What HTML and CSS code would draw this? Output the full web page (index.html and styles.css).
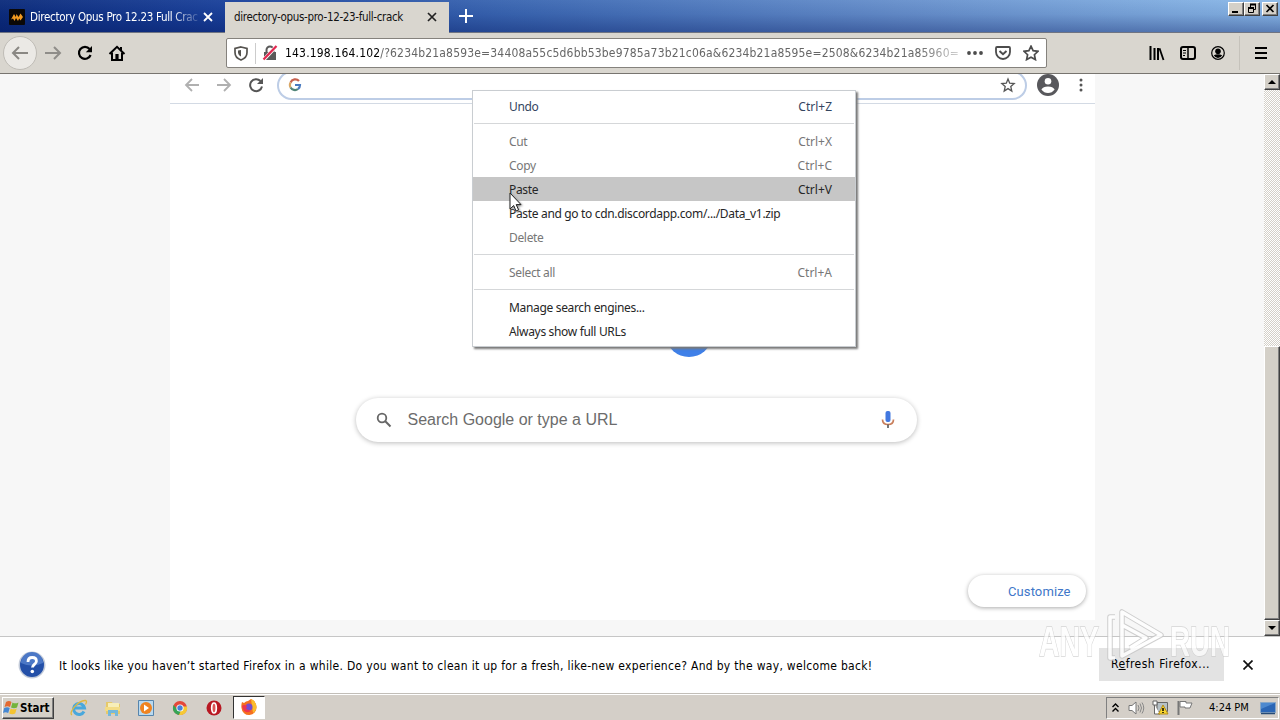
FILE: index.html
```html
<!DOCTYPE html>
<html lang="en">
<head>
<meta charset="utf-8">
<title>directory-opus-pro-12-23-full-crack</title>
<link rel="stylesheet" href="styles.css">
</head>
<body>
<header class="tabs">
  <div class="tab">
    <svg class="favicon" width="16" height="16" viewBox="0 0 16 16"><rect width="16" height="16" rx="1" fill="#0b0807"/><path d="M2 10.500 5 5l1.800 3L7.500 5l2 3 2-3.500L14 8l-2.500 3.500-1.300-2-1.200 2.500-2-3-1.500 3-1.500-2.500z" fill="#f39a21"/></svg>
    <span class="tab-title tab-title-faded">Directory Opus Pro 12.23 Full Crac</span>
    <svg class="tab-close" width="10" height="10" viewBox="0 0 10 10"><path d="M1 1l8 8M9 1l-8 8" stroke="#fff" stroke-width="1.800"/></svg>
  </div>
  <div class="tab tab-active">
    <span class="tab-title">directory-opus-pro-12-23-full-crack</span>
    <svg class="tab-close" width="10" height="10" viewBox="0 0 10 10"><path d="M1 1l8 8M9 1l-8 8" stroke="#222" stroke-width="1.700"/></svg>
  </div>
  <svg class="new-tab" width="14" height="14" viewBox="0 0 14 14"><path d="M7 0v14M0 7h14" stroke="#fff" stroke-width="2"/></svg>
  <div class="window-buttons">
    <span class="bevel winbtn"><svg width="14" height="12" viewBox="0 0 14 12"><path d="M3 9h6" stroke="#000" stroke-width="2"/></svg></span>
    <span class="bevel winbtn"><svg width="14" height="12" viewBox="0 0 14 12"><path d="M5.500 4V1.500h5v5H9" fill="none" stroke="#000"/><path d="M5 1.500h6M3 5h6" stroke="#000" stroke-width="2"/><path d="M3.500 4.500h5v5h-5z" fill="none" stroke="#000"/></svg></span>
    <span class="bevel winbtn winbtn-close"><svg width="14" height="12" viewBox="0 0 14 12"><path d="M3.500 2l7 7M10.500 2l-7 7" stroke="#000" stroke-width="1.700"/></svg></span>
  </div>
</header>

<nav class="toolbar">
  <div class="nav-icons">
    <span class="back"><svg width="18" height="14" viewBox="0 0 18 14"><path d="M17 7H2M8 1L2 7l6 6" fill="none" stroke="#8a8883" stroke-width="2"/></svg></span>
    <svg class="forward" width="18" height="14" viewBox="0 0 18 14"><path d="M1 7h15M10 1l6 6-6 6" fill="none" stroke="#8f8d89" stroke-width="2"/></svg>
    <svg class="reload" width="16" height="16" viewBox="0 0 16 16"><path d="M12.600 4A6 6 0 1 0 13.600 10" fill="none" stroke="#000" stroke-width="2.200"/><path d="M15 1v6.200H8.800z"/></svg>
    <svg class="home" width="18" height="17" viewBox="0 0 18 17"><path d="M1.500 9L9 1.800 16.500 9" fill="none" stroke="#000" stroke-width="2"/><path d="M4 7.500V15h10V7.500" fill="none" stroke="#000" stroke-width="2"/><path d="M7.400 9h3.200v5H7.400z"/><path d="M12 2h2v4l-2-2z"/></svg>
  </div>
  <div class="urlbar">
    <svg width="14" height="15" viewBox="0 0 14 15"><path d="M7 1L13 2.500v4c0 3.500-2.500 6.200-6 7.500C3.500 12.700 1 10 1 6.500v-4z" fill="none" stroke="#55534f" stroke-width="1.700"/><path d="M7 4v6.500c-2-1-3-2.500-3-4V4.500z" fill="#55534f"/></svg>
    <span class="url-divider"></span>
    <svg class="lock" width="16" height="16" viewBox="0 0 16 16"><path d="M4.500 7V5a3.500 3.500 0 0 1 7 0v2" fill="none" stroke="#5a5a5a" stroke-width="2"/><path d="M2 7h12v8H2z" fill="#5a5a5a"/><path d="M1.500 15L14.500 1" stroke="#fff" stroke-width="3.500"/><path d="M1.500 14.500L14.500 1" stroke="#e22850" stroke-width="2.300"/></svg>
    <span class="url"><b>143.198.164.102</b>/?6234b21a8593e=34408a55c5d6bb53be9785a73b21c06a&amp;6234b21a8595e=2508&amp;6234b21a85960=</span>
    <svg class="dots" width="16" height="4" viewBox="0 0 16 4"><g fill="#4c4c4c"><circle cx="2" cy="2" r="1.900"/><circle cx="8" cy="2" r="1.900"/><circle cx="14" cy="2" r="1.900"/></g></svg>
    <svg class="pocket" width="16" height="14" viewBox="0 0 16 14"><path d="M2 1h12q1 0 1 1v4a7 7 0 0 1-14 0V2q0-1 1-1z" fill="none" stroke="#4c4c4c" stroke-width="1.800"/><path d="M4.500 5L8 8.200 11.500 5" fill="none" stroke="#4c4c4c" stroke-width="2"/></svg>
    <svg width="16" height="16" viewBox="0 0 16 16"><path d="M8 1.200l2.100 4.500 4.900.6-3.600 3.400 1 4.900L8 12.200l-4.400 2.400 1-4.900L1 6.300l4.900-.6z" fill="none" stroke="#4c4c4c" stroke-width="1.700"/></svg>
  </div>
  <div class="right-icons">
    <svg width="16" height="15" viewBox="0 0 16 15"><path d="M1.500 0v14M5.500 2v12M9 2v12" stroke="#000" stroke-width="2"/><path d="M10.500 2.200L14.500 14" stroke="#000" stroke-width="1.800"/></svg>
    <svg width="16" height="14" viewBox="0 0 16 14"><rect x="1" y="1" width="14" height="12" rx="2" fill="none" stroke="#000" stroke-width="2"/><path d="M8 1v12" stroke="#000" stroke-width="1.500"/><path d="M3 4.500h3M3 7h3M3 9.500h2" stroke="#000"/></svg>
    <svg width="14" height="14" viewBox="0 0 14 14"><circle cx="7" cy="7" r="6.300" fill="none" stroke="#000" stroke-width="1.200"/><circle cx="7" cy="5.200" r="2.800"/><path d="M2.800 9.200q4.200-2 8.400 0Q9.800 12 7 12t-4.200-2.800z"/></svg>
    <span class="tool-divider"></span>
    <svg width="12" height="12" viewBox="0 0 12 12"><path d="M0 1h12M0 6h12M0 11h12" stroke="#000" stroke-width="2"/></svg>
  </div>
</nav>

<main class="viewport">
  <div class="page">
    <section class="shot">
      <div class="chrome-bar">
        <svg width="16" height="14" viewBox="0 0 16 14"><path d="M15 7H2M8 1L2 7l6 6" fill="none" stroke="#b0b0b0" stroke-width="1.800"/></svg>
        <svg width="16" height="14" viewBox="0 0 16 14"><path d="M1 7h13M8 1l6 6-6 6" fill="none" stroke="#b0b0b0" stroke-width="1.800"/></svg>
        <svg width="16" height="16" viewBox="0 0 16 16"><path d="M12.500 4A6 6 0 1 0 14 9.500" fill="none" stroke="#555" stroke-width="2"/><path d="M15 1v6H9z" fill="#555"/></svg>
        <div class="omnibox">
          <svg width="14" height="14" viewBox="0 0 14 14" fill="none" stroke-width="2.200"><path d="M11 3A5 5 0 0 0 2.600 4.500" stroke="#c7624f"/><path d="M2.600 4.500a5 5 0 0 0 0 5" stroke="#d9a765"/><path d="M2.600 9.500A5 5 0 0 0 10 11" stroke="#508477"/><path d="M10 11q2-1.500 2-4H7" stroke="#4a7abf"/></svg>
          <svg width="16" height="16" viewBox="0 0 16 16"><path d="M8 2l1.700 4.200 4.500.4-3.400 3 1 4.400L8 11.600 4.200 14l1-4.400-3.400-3 4.500-.4z" fill="none" stroke="#555" stroke-width="1.300"/></svg>
        </div>
        <svg class="avatar" width="22" height="22" viewBox="0 0 22 22"><circle cx="11" cy="11" r="11" fill="#58585c"/><circle cx="11" cy="7.200" r="3.300" fill="#fff"/><path d="M4.400 15.500q1.600-3 6.600-3t6.600 3Q15 19 11 19t-6.600-3.500z" fill="#fff"/></svg>
        <svg class="kebab" width="4" height="14" viewBox="0 0 4 14"><g fill="#555"><circle cx="2" cy="2" r="1.500"/><circle cx="2" cy="7" r="1.500"/><circle cx="2" cy="12" r="1.500"/></g></svg>
      </div>
      <div class="newtab">
        <div class="logo-dot"></div>
        <div class="search">
          <svg width="16" height="16" viewBox="0 0 16 16"><circle cx="6" cy="6" r="4.300" fill="none" stroke="#666" stroke-width="1.800"/><path d="M9.300 9.300L14.500 14.500" stroke="#666" stroke-width="2"/></svg>
          <span class="search-text">Search Google or type a URL</span>
          <svg width="14" height="18" viewBox="0 0 14 18"><rect x="4.500" y="0" width="5" height="11" rx="2" fill="#4278e0"/><path d="M1.500 8.500q0 5 5.500 5t5.500-5" fill="none" stroke="#c9805e" stroke-width="1.700"/><path d="M7 13.500V17" stroke="#555" stroke-width="1.600"/></svg>
        </div>
        <div class="customize">Customize</div>
      </div>
    </section>
  </div>
  <aside class="scrollbar">
    <span class="bevel scroll-button"><svg width="8" height="4" viewBox="0 0 8 4"><path d="M0 4l4-4 4 4z"/></svg></span>
    <span class="bevel scroll-thumb"></span>
    <span class="bevel scroll-button"><svg width="8" height="4" viewBox="0 0 8 4"><path d="M0 0l4 4 4-4z"/></svg></span>
  </aside>

  <div class="menu">
    <div class="menu-item menu-blue"><span>Undo</span><span class="key">Ctrl+Z</span></div>
    <hr>
    <div class="menu-item menu-off"><span>Cut</span><span class="key">Ctrl+X</span></div>
    <div class="menu-item menu-off"><span>Copy</span><span class="key">Ctrl+C</span></div>
    <div class="menu-item menu-hover"><span>Paste</span><span class="key">Ctrl+V</span></div>
    <div class="menu-item"><span>Paste and go to cdn.discordapp.com/.../Data_v1.zip</span></div>
    <div class="menu-item menu-off"><span>Delete</span></div>
    <hr>
    <div class="menu-item menu-off"><span>Select all</span><span class="key">Ctrl+A</span></div>
    <hr>
    <div class="menu-item"><span>Manage search engines...</span></div>
    <div class="menu-item"><span>Always show full URLs</span></div>
  </div>
  <svg class="cursor" width="14" height="21" viewBox="0 0 14 21"><path d="M1 1v16l3.700-3.500L7 19l2.600-1.100-2.400-5.300H12z" fill="#fff" stroke="#222"/></svg>
</main>

<section class="notice">
  <svg class="question" width="28" height="28" viewBox="0 0 28 28"><circle cx="14" cy="14" r="13.500" fill="#c3cbd9"/><circle cx="14" cy="14" r="12" fill="#2450a8"/><path d="M3 12a11 11 0 0 1 22 0q-11 5-22 0z" fill="#4c78c6"/><path d="M10 11q0-4.500 4.200-4.500t4.200 3.700c0 3-4 3.300-4 6.300" fill="none" stroke="#fff" stroke-width="2.800"/><circle cx="14.300" cy="20.500" r="1.800" fill="#fff"/></svg>
  <span class="notice-text">It looks like you haven’t started Firefox in a while. Do you want to clean it up for a fresh, like-new experience? And by the way, welcome back!</span>
  <span class="refresh">R<u>e</u>fresh Firefox...</span>
  <svg class="notice-close" width="10" height="10" viewBox="0 0 10 10"><path d="M.5.500l9 9M9.500.500l-9 9" stroke="#111" stroke-width="1.700"/></svg>
</section>

<footer class="taskbar">
  <div class="bevel start">
    <svg width="17" height="16" viewBox="0 0 17 16"><path d="M3 2q3-2 5.500 0L7 7Q4.500 5.500 1.500 7z" fill="#e36a32"/><path d="M9.500 2.500q2.500 1.700 6 0L14 7.500q-3 1.500-6 0z" fill="#74b43d"/><path d="M1.200 8q3-1.500 5.500 0L5.200 13Q2.500 11.500 0 13z" fill="#4588d3"/><path d="M7.700 8.500q3 1.700 6 0l-1.500 5q-3 1.500-6 0z" fill="#f4c432"/></svg>
    <span>Start</span>
  </div>
  <div class="launchers">
    <svg width="18" height="18" viewBox="0 0 18 18"><path d="M14 12.500A5.500 5.500 0 1 1 14.500 9H5" fill="none" stroke="#49a8dc" stroke-width="3"/><path d="M2 16C-2 14 8 1 15.500 1.500q2 .5 0 4" fill="none" stroke="#e0b83f" stroke-width="1.300"/></svg>
    <svg width="18" height="18" viewBox="0 0 18 18"><path d="M2 3h6l1 2h7v10H2z" fill="#e6c96a"/><path d="M4 4h11v5H4z" fill="#f7eeb8"/><path d="M1 8h15v4H1z" fill="#f3dc85"/><path d="M4 17v-6h10v6h-3v-3H7v3z" fill="#74b8da"/></svg>
    <svg width="18" height="18" viewBox="0 0 18 18"><path d="M1.500 1.500h15v15h-15z" fill="#b9d9ef" stroke="#5685ad"/><circle cx="9" cy="9" r="6" fill="#ef8320"/><path d="M7 5.500v7l5-3.500z" fill="#fff"/></svg>
    <svg width="18" height="18" viewBox="0 0 18 18"><circle cx="9" cy="9" r="7" fill="#e4483a"/><path d="M2.600 6A7 7 0 0 0 8 16l3-6-5 0z" fill="#36a456"/><path d="M16 7.500A7 7 0 0 1 8 16l3.500-8.500z" fill="#f6c934"/><circle cx="9" cy="9" r="3.600" fill="#fff"/><circle cx="9" cy="9" r="2.700" fill="#4780d9"/></svg>
    <svg width="18" height="18" viewBox="0 0 18 18"><circle cx="9" cy="9" r="7.500" fill="#b81822"/><ellipse cx="9" cy="9" rx="2.300" ry="5" fill="#d55" stroke="#fff" stroke-width="1.700"/></svg>
  </div>
  <div class="running">
    <svg width="18" height="18" viewBox="0 0 18 18"><path d="M2 4l2 1q2-2 4-2l3-2q5 2 5.500 8A7.500 7.500 0 0 1 1.500 10Q1 7 2 4z" fill="#f5701f"/><path d="M11 1q5 2 5.500 8a7 7 0 0 1-3.500 6l-1-7z" fill="#fbbc2c"/><circle cx="9" cy="9" r="3.500" fill="#754bd0"/><path d="M2 8q2-2 5 0l-1 3 5 2q-7 4-9-5z" fill="#ee3550"/></svg>
  </div>
  <div class="tray">
    <svg width="7" height="10" viewBox="0 0 7 10"><path d="M.5 4L3.500 1l3 3M.5 8.500l3-3 3 3" fill="none" stroke="#000" stroke-width="1.400"/></svg>
    <svg class="speaker" width="17" height="14" viewBox="0 0 17 14"><path d="M1 4.500h3L8 1v12L4 9.500H1z" fill="#fff" stroke="#777"/><path d="M10 4q2 3 0 6M12 2.500q3 4.500 0 9M14 1.500q3.500 5.500 0 11" fill="none" stroke="#888"/></svg>
    <svg class="network" width="17" height="16" viewBox="0 0 17 16"><path d="M5 2.500h10.500v9H5z" fill="#b7c1c6" stroke="#666"/><path d="M1 1h4v4H1zM2.500 5v9H8" fill="#fff" stroke="#666"/><path d="M11 5l5 9H6.500z" fill="#f8d62e" stroke="#b38b18"/><path d="M11 8v3M11 12v1" stroke="#000" stroke-width="1.500"/></svg>
    <svg class="flag" width="16" height="15" viewBox="0 0 16 15"><path d="M1.500 1v14" stroke="#777" stroke-width="2"/><path d="M3 1.500h6v1.500h6l-2 5H8V7H3z" fill="#fff" stroke="#777"/></svg>
    <span class="clock">4:24 PM</span>
    <svg width="16" height="14" viewBox="0 0 16 14"><path d="M.5 1.500h15v10H.5z" fill="#2b66b5" stroke="#87a7c8"/><path d="M1 2h14L1 8z" fill="#4d89cf"/><path d="M1 12.500h14" stroke="#274b75" stroke-width="1.500"/></svg>
  </div>
</footer>

<svg class="watermark" width="200" height="66" viewBox="0 0 200 66">
  <g class="watermark-text">
    <text x="3" y="48" textLength="60" lengthAdjust="spacingAndGlyphs">ANY</text>
    <text x="134" y="48" textLength="60" lengthAdjust="spacingAndGlyphs">RUN</text>
  </g>
  <g fill="none" stroke-linejoin="round"><path d="M79 9h-5v41h5M86 4v44l39-21zM86 17l24 13-16 10" stroke="#c8c8c8" stroke-width="5.500"/><path d="M79 9h-5v41h5M86 4v44l39-21zM86 17l24 13-16 10" stroke="#fff" stroke-width="3.500"/></g>
</svg>
</body>
</html>
```
FILE: styles.css
```css
* { box-sizing: border-box; }
body {
  margin: 0;
  width: 1280px;
  height: 720px;
  overflow: hidden;
  position: relative;
  display: flex;
  flex-direction: column;
  font: 12px/16px "DejaVu Sans Condensed", "DejaVu Sans", sans-serif;
  font-stretch: condensed;
  color: #000;
}
svg { display: block; flex: none; }
span { white-space: nowrap; }

.bevel {
  background: #d4d0c8;
  border: 1px solid;
  border-color: #fff #404040 #404040 #fff;
  box-shadow: inset -1px -1px #808080;
}

.tabs {
  height: 33px;
  display: flex;
  align-items: flex-start;
  border-bottom: 1px solid #6f7482;
  background: linear-gradient(to bottom, rgba(255,255,255,.04), rgba(0,18,90,.08) 45%, rgba(0,18,90,.36)), linear-gradient(to right, #0c2c7c, #1b429c 18%, #3b67b2 40%, #6790cc 70%, #8bb9e8);
}
.tab { width: 225px; height: 32px; padding: 2px 13px 0 9px; display: flex; align-items: center; color: #fff; }
.tab-title { flex: 1; font-size: 11.5px; letter-spacing: -.34px; }
.tab-title-faded { margin: 0 5px 0 5px; letter-spacing: -.3px; mask-image: linear-gradient(to right, #000 84%, rgba(0,0,0,.15)); }
.tab-active { width: 224px; height: 33px; margin-top: 2px; padding: 0 12px 3px 9px; background: #d9d6cf; color: #111; }
.new-tab { margin: 9px 0 0 10px; }
.window-buttons { margin: 2px 2px 0 auto; display: flex; }
.winbtn { width: 16px; height: 14px; }
.winbtn-close { margin-left: 2px; }

.toolbar { height: 41px; display: flex; align-items: center; background: #d9d6cf; border-bottom: 1px solid #77746f; }
.nav-icons { width: 226px; display: flex; align-items: center; }
.back { width: 34px; height: 34px; margin-left: 3px; border: 1px solid #bfbcb6; border-radius: 50%; background: #ebe9e5; display: grid; place-items: center; }
.forward { margin-left: 7px; }
.reload { margin-left: 15px; }
.home { margin-left: 15px; }
.urlbar { width: 821px; height: 30px; display: flex; align-items: center; padding: 0 7px; background: #fff; border: 1px solid #85827d; border-radius: 2px; }
.url-divider { width: 1px; height: 21px; margin: 0 6px 0 7px; background: #ccc; }
.url { width: 675px; margin-left: 7px; overflow: hidden; color: #666; letter-spacing: .175px; mask-image: linear-gradient(to right, #000 94%, rgba(0,0,0,.3)); }
.url b { font-weight: normal; color: #000; }
.dots { margin-left: 9px; }
.pocket { margin: 0 12px; }
.right-icons { flex: 1; padding: 0 13px 0 102px; display: flex; align-items: center; justify-content: space-between; }
.tool-divider { width: 1px; height: 34px; background: #c5c2bb; }

.viewport { position: relative; height: 562px; display: flex; }
.page { width: 1264px; padding: 0 169px 0 170px; background: #f7f7f7; }
.shot { height: 546px; background: #fff; display: flex; flex-direction: column; }
.chrome-bar { height: 30px; padding: 0 12px 7px 14px; display: flex; align-items: center; gap: 16px; border-bottom: 1px solid #d3dae4; overflow: hidden; }
.omnibox { width: 750px; height: 29px; margin: 0 -6px 0 -3px; padding: 0 9px; display: flex; flex: none; align-items: center; justify-content: space-between; border: 2px solid #bdcde6; border-radius: 15px; }
.kebab { margin-left: 4px; }
.newtab { flex: 1; display: flex; flex-direction: column; padding: 214px 9px 13px 186px; }
.logo-dot { width: 44px; height: 39px; margin-left: 311px; border-radius: 50%; background: #3f80e8; }
.search { width: 561px; height: 44px; margin-top: 41px; padding: 0 22px 0 20px; display: flex; align-items: center; border-radius: 23px; box-shadow: 0 1px 5px #bbb; }
.search-text { flex: 1; margin-left: 15.5px; font: 16px/20px "Liberation Sans", Arial, sans-serif; color: #6c6c6c; }
.customize { width: 118px; height: 32px; margin: auto 0 0 auto; padding-left: 40px; border-radius: 16px; box-shadow: 0 1px 4px #aaa; font: 13px/33px Roboto, sans-serif; letter-spacing: .1px; color: #4077c9; }

.scrollbar { width: 16px; display: flex; flex-direction: column; background: repeating-conic-gradient(#d4d0c8 0 25%, #fff 0 50%) 0 0 / 2px 2px; }
.scroll-button { height: 16px; display: grid; place-items: center; }
.scroll-thumb { height: 274px; margin-top: auto; }

.menu { position: absolute; left: 472px; top: 16px; width: 384px; height: 257px; padding: 3px 0; background: #fff; border: 1px solid #c9cdd1; box-shadow: 2px 2px 2px #777; font: 12px/24px "Noto Sans", sans-serif; font-stretch: normal; color: #262626; }
.menu-item { height: 24px; padding: 1px 23px 0 36px; display: flex; justify-content: space-between; letter-spacing: -.33px; }
.key { letter-spacing: 0; }
.menu-off { color: #777; }
.menu-blue { color: #34455f; }
.menu-hover { background: #c6c6c6; }
.menu hr { height: 1px; margin: 5px 1px; border: 0; background: #d5d7d9; }
.cursor { position: absolute; left: 509px; top: 118px; filter: drop-shadow(1px 1px 1px #888); }

.notice { height: 57px; display: flex; align-items: center; background: #fff; border-top: 1px solid #c6c6c6; }
.question { margin-left: 18px; }
.notice-text { width: 1040px; margin-left: 13px; padding-top: 1px; letter-spacing: .305px; }
.refresh { width: 125px; height: 33px; margin-top: -1px; padding-left: 12px; background: #e3e3e3; line-height: 33px; letter-spacing: .5px; }
.notice-close { margin-left: 19px; }

.taskbar { height: 27px; display: flex; align-items: center; background: #d4cfc8; border-top: 1px solid #c2beb8; box-shadow: inset 0 1px #fff; }
.start { width: 52px; height: 22px; margin: 1px 0 0 2px; padding-left: 0; display: flex; align-items: center; font-weight: bold; font-size: 11.5px; }
.launchers { display: flex; gap: 15.7px; margin: 1px 0 0 16px; }
.running { width: 32px; height: 23px; margin: 0 0 0 10px; display: grid; place-items: center; background: #fff; border: 1px solid; border-color: #333 #fff #fff #333; }
.tray { width: 173px; height: 22px; margin: 1px 1px 0 auto; padding: 0 2px 0 5px; display: flex; align-items: center; border: 1px solid; border-color: #808080 #fff #fff #808080; }
.speaker { margin-left: 9px; }
.network { margin-left: 7px; }
.flag { margin-left: 8px; }
.clock { flex: 1; margin-left: 16px; font-size: 11px; }

.watermark { position: absolute; left: 1036px; top: 608px; opacity: .85; }
.watermark-text { font: bold 43px "Liberation Sans", sans-serif; fill: #fff; stroke: #c8c8c8; stroke-width: 1.5px; paint-order: stroke; opacity: .85; }
```
